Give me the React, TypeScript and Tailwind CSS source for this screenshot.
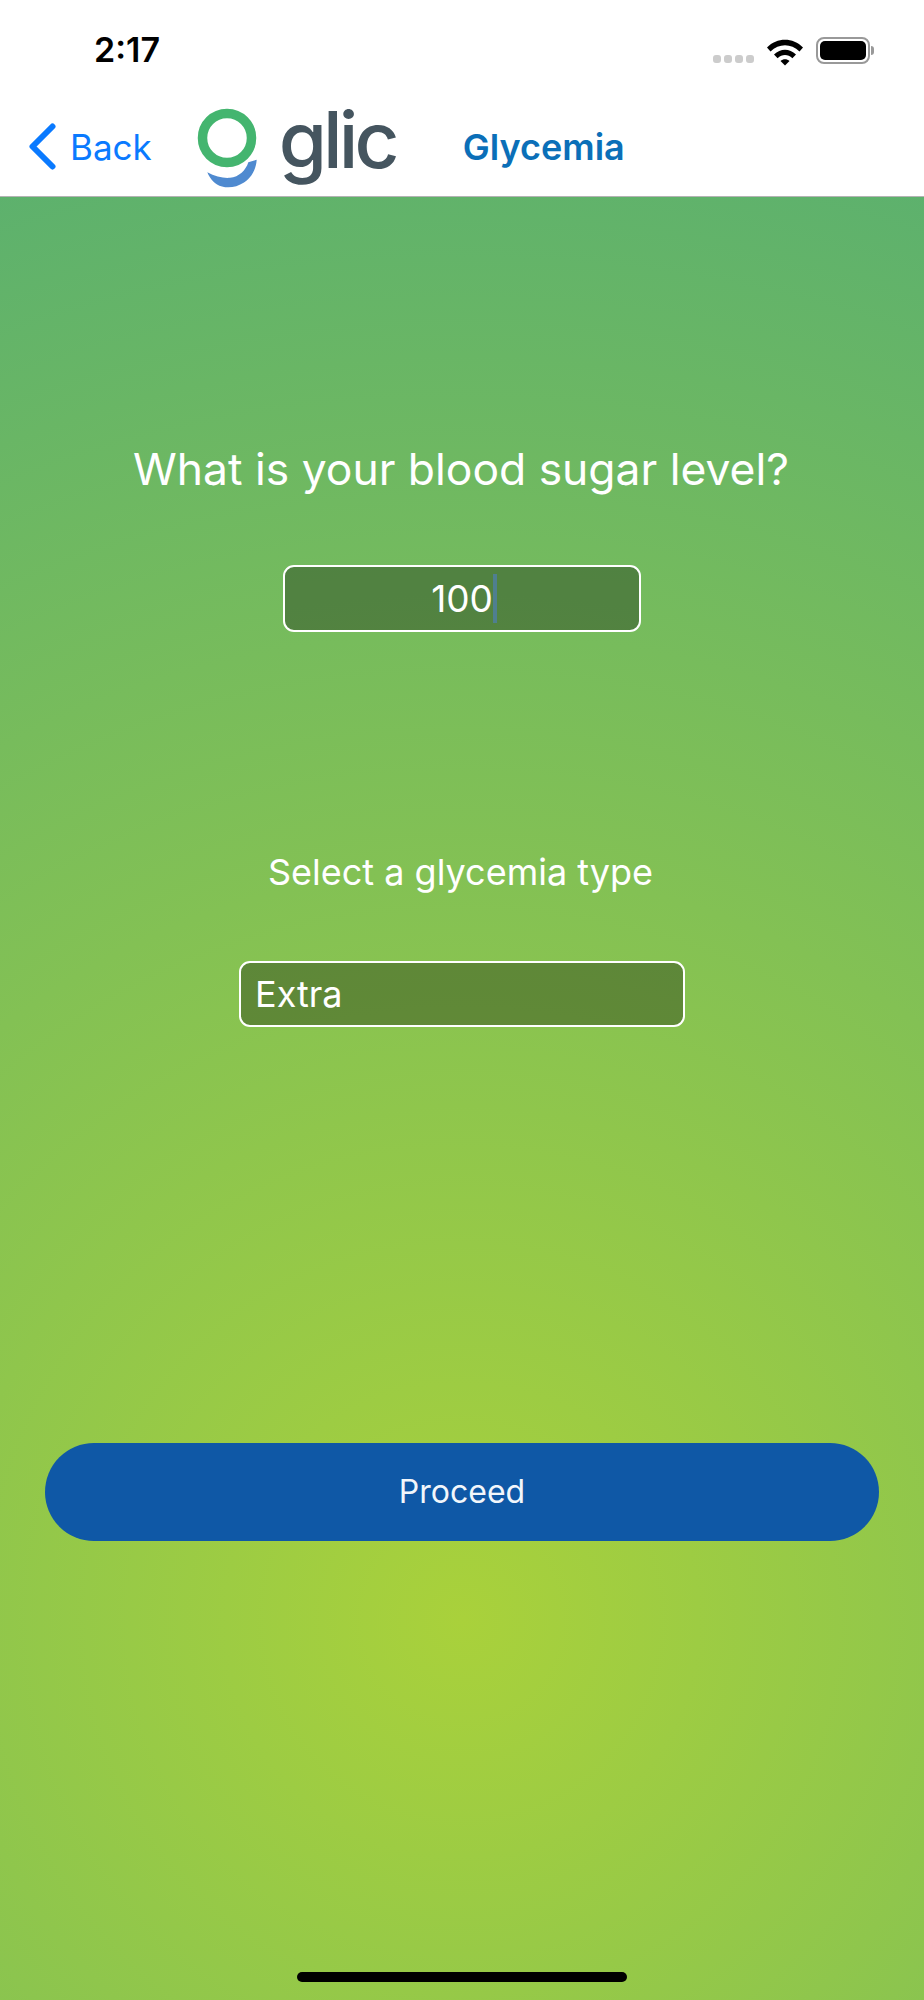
function StatusBar() {
  return (
    <div className="h-[88px] flex items-start justify-between pl-[94px] pr-[50px] pt-[29px]">
      <span className="text-[34px] leading-[42px] font-semibold text-black">2:17</span>
      <div className="flex items-start">
        {/* no signal dots */}
        <div className="flex gap-[3px] mt-[26px] mr-[13px]">
          <span className="w-[8px] h-[8px] rounded-[3px] bg-[#cccccc]" />
          <span className="w-[8px] h-[8px] rounded-[3px] bg-[#cccccc]" />
          <span className="w-[8px] h-[8px] rounded-[3px] bg-[#cccccc]" />
          <span className="w-[8px] h-[8px] rounded-[3px] bg-[#cccccc]" />
        </div>
        <svg width="36" height="27" viewBox="0 0 36 27" className="mt-[10px] mr-[13px]">
          <path d="M0 8.5C10 -1.8 26 -1.8 36 8.5L32.5 12.5C24 4.2 12 4.2 3.5 12.5Z" fill="#000" />
          <path d="M7 15.5C13.5 9 22.5 9 29 15.5L25.4 19.3C20.8 15 15.2 15 10.6 19.3Z" fill="#000" />
          <path d="M13.5 22C16 19.7 20 19.7 22.5 22L18 26.5Z" fill="#000" />
        </svg>
        {/* battery */}
        <div className="flex items-center mt-[8px]">
          <div className="w-[54px] h-[27px] rounded-[8px] border-2 border-[#999999] p-[2px]">
            <div className="w-full h-full rounded-[5px] bg-black" />
          </div>
          <span className="w-[3px] h-[9px] ml-[1px] rounded-r-full bg-[#999999]" />
        </div>
      </div>
    </div>
  );
}

function Logo() {
  return (
    <div className="flex items-start ml-[45px] w-[212px] h-[80px]">
      <svg width="62" height="82" viewBox="0 0 62 82" className="shrink-0 mt-[1px]">
        <circle cx="30" cy="30" r="24.5" fill="none" stroke="#44b56f" strokeWidth="9.5" />
        <path
          d="M10.3 64.2C18 68.5 27 70.5 33 69.8C42 69 49 62 51.3 54.2L59.7 51.8C59 62 54 70 47 74.5C40 79 32 80.5 25 78.5C18 76.5 13 71 10.3 64.2Z"
          fill="#4f8ad0"
        />
      </svg>
      <span className="ml-[20px] -mt-[14px] text-[78px] leading-[94px] font-medium tracking-[-4px] text-[#45555f]">
        glic
      </span>
    </div>
  );
}

function NavBar() {
  return (
    <div className="h-[109px] flex items-center border-b border-[#b3b3b3] pt-[9px]">
      <button className="flex items-center text-[#0a7aff] pl-[29px]">
        <svg width="27" height="47" viewBox="0 0 27 47" className="shrink-0">
          <path d="M23.5 3.5L3.5 23.5L23.5 43.5" fill="none" stroke="#0a7aff" strokeWidth="6" strokeLinecap="round" strokeLinejoin="round" />
        </svg>
        <span className="ml-[14px] text-[35px] leading-[44px]">Back</span>
      </button>
      <Logo />
      <span className="ml-[54px] text-[36px] leading-[44px] font-semibold text-[#0b6fb8]">Glycemia</span>
    </div>
  );
}

export default function App() {
  return (
    <div className="w-[924px] h-[2000px] flex flex-col bg-white [font-family:Inter,sans-serif]">
      <StatusBar />
      <NavBar />
      <main className="flex-1 flex flex-col items-center bg-[radial-gradient(circle_1500px_at_462px_1423px,#a9d13b_0%,#5db16d_100%)] text-white">
        <h1 className="mt-[244px] mr-[2px] text-[44.4px] leading-[56px] font-normal">What is your blood sugar level?</h1>

        <div className="mt-[68px] w-[358px] h-[67px] flex items-center justify-center rounded-[11px] border-2 border-white bg-black/30 text-[37px] leading-[44px]">
          <span>100</span>
          <span className="w-[4px] h-[49px] -mr-[4px] bg-[#4f7f90]" />
        </div>

        <h2 className="mt-[217px] mr-[3px] text-[36px] leading-[46px] font-normal">Select a glycemia type</h2>

        <div className="mt-[66px] w-[446px] h-[66px] flex items-center rounded-[11px] border-2 border-white bg-black/30 pl-[14px] text-[36px] leading-[44px]">
          Extra
        </div>

        <button className="mt-[416px] w-[834px] h-[98px] rounded-[49px] bg-[#0f58a6] text-[32px] leading-[40px] text-[#f2f6fb]">
          Proceed
        </button>

        <div className="mt-auto mb-[18px] w-[330px] h-[10px] rounded-full bg-black" />
      </main>
    </div>
  );
}
